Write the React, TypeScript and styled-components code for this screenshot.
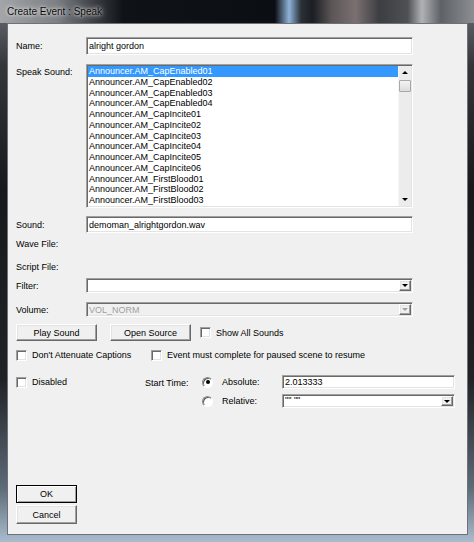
import React from 'react';
import styled, { createGlobalStyle, css } from 'styled-components';

const GlobalStyle = createGlobalStyle`
  html, body {
    margin: 0;
    padding: 0;
    background: #1c1d20;
  }
  body {
    font-family: 'Liberation Sans', Arial, sans-serif;
  }
  * {
    box-sizing: border-box;
  }
`;

const sunken = css`
  border: 1px solid;
  border-color: #a0a0a0 #ffffff #ffffff #a0a0a0;
  box-shadow: inset 1px 1px 0 #696969, inset -1px -1px 0 #e3e3e3;
`;

const raised = css`
  border: 1px solid;
  border-color: #ffffff #696969 #696969 #ffffff;
  box-shadow: inset -1px -1px 0 #a0a0a0, inset 1px 1px 0 #e3e3e3;
`;

const Window = styled.div`
  width: 474px;
  height: 542px;
  display: flex;
  flex-direction: column;
  background: linear-gradient(
    to bottom,
    #6d7075 0%,
    #34363a 12%,
    #18191c 35%,
    #202226 70%,
    #5d6a78 90%,
    #a9bccd 100%
  );
`;

const TitleBar = styled.div`
  height: 23px;
  flex-shrink: 0;
  display: flex;
  align-items: center;
  padding-left: 7px;
  background: linear-gradient(
    to right,
    #a3a5a8 0%,
    #7c7f83 12%,
    #3a3d42 20%,
    #0f1216 26%,
    #0b0e13 58%,
    #8fb3d8 61%,
    #2b3037 63.5%,
    #1b1e23 66%,
    #5c5657 70%,
    #7b7071 75%,
    #3d3e42 80%,
    #4e5054 86%,
    #b0b2b5 89%,
    #5e6165 93%,
    #8b8e92 100%
  );
`;

const Title = styled.span`
  font-size: 10px;
  color: #0a0a0a;
  text-shadow: 0 0 6px rgba(255, 255, 255, 0.9), 0 0 3px rgba(255, 255, 255, 0.8);
`;

const Frame = styled.div`
  flex: 1;
  display: flex;
  padding: 0 6px 7px 7px;
`;

const Panel = styled.div`
  flex: 1;
  display: flex;
  flex-direction: column;
  background: #f0f0f0;
  border: 1px solid #6e7278;
  padding: 13px 12px 10px 8px;
  font-size: 9px;
  color: #000;
`;

const Row = styled.div<{ $mt?: number; $h: number; $top?: boolean }>`
  display: flex;
  align-items: ${(p) => (p.$top ? 'flex-start' : 'center')};
  margin-top: ${(p) => p.$mt ?? 0}px;
  height: ${(p) => p.$h}px;
  flex-shrink: 0;
`;

const Label = styled.div<{ $w?: number; $pt?: number }>`
  width: ${(p) => p.$w ?? 70}px;
  flex-shrink: 0;
  padding-top: ${(p) => p.$pt ?? 0}px;
  white-space: nowrap;
`;

const TextBox = styled.div<{ $w?: number }>`
  ${sunken};
  width: ${(p) => p.$w ?? 327}px;
  height: 100%;
  background: #fff;
  display: flex;
  align-items: center;
  padding-left: 2px;
  white-space: nowrap;
`;

const ListBox = styled.div`
  ${sunken};
  width: 327px;
  height: 100%;
  background: #fff;
  display: flex;
  padding: 1px;
`;

const Items = styled.div`
  flex: 1;
  overflow: hidden;
`;

const Item = styled.div<{ $selected?: boolean }>`
  height: 10.75px;
  line-height: 10.75px;
  padding-left: 1px;
  white-space: nowrap;
  background: ${(p) => (p.$selected ? '#3399ff' : 'transparent')};
  color: ${(p) => (p.$selected ? '#fff' : '#000')};
`;

const ScrollBar = styled.div`
  width: 13px;
  flex-shrink: 0;
  background: #ececec;
  border-left: 1px solid #f6f6f6;
  display: flex;
  flex-direction: column;
  align-items: center;
`;

const ArrowCell = styled.div`
  height: 13px;
  width: 100%;
  display: flex;
  align-items: center;
  justify-content: center;
`;

const Triangle = styled.div<{ $dir: 'up' | 'down'; $color?: string }>`
  width: 0;
  height: 0;
  border-left: 3px solid transparent;
  border-right: 3px solid transparent;
  ${(p) =>
    p.$dir === 'up'
      ? `border-bottom: 3px solid ${p.$color ?? '#000'};`
      : `border-top: 3px solid ${p.$color ?? '#000'};`}
`;

const Thumb = styled.div`
  width: 12px;
  height: 12px;
  margin-top: 1px;
  border: 1px solid #a8a8a8;
  border-radius: 1px;
  background: linear-gradient(to bottom, #f4f4f4, #dcdcdc);
`;

const Spacer = styled.div`
  flex: 1;
`;

const Combo = styled.div<{ $w?: number; $disabled?: boolean }>`
  ${sunken};
  width: ${(p) => p.$w ?? 327}px;
  height: 100%;
  background: ${(p) => (p.$disabled ? '#f0f0f0' : '#fff')};
  color: ${(p) => (p.$disabled ? '#a0a0a0' : '#000')};
  display: flex;
  align-items: center;
  padding: 1px 1px 1px 2px;
  white-space: nowrap;
`;

const ComboText = styled.div<{ $top?: boolean }>`
  flex: 1;
  align-self: ${(p) => (p.$top ? 'flex-start' : 'center')};
  line-height: ${(p) => (p.$top ? '8px' : 'normal')};
`;

const DropButton = styled.div`
  ${raised};
  width: 12px;
  height: 100%;
  background: #f0f0f0;
  display: flex;
  align-items: center;
  justify-content: center;
  flex-shrink: 0;
`;

const PushButton = styled.div<{ $w: number; $default?: boolean }>`
  ${raised};
  width: ${(p) => p.$w}px;
  height: 100%;
  background: #f0f0f0;
  display: flex;
  align-items: center;
  justify-content: center;
  flex-shrink: 0;
  ${(p) =>
    p.$default &&
    css`
      outline: 1px solid #000;
      outline-offset: -1px;
      border-color: #000 #696969 #696969 #000;
      box-shadow: inset 1px 1px 0 #ffffff, inset -1px -1px 0 #a0a0a0;
    `}
`;

const CheckLabel = styled.div<{ $w?: number; $ml?: number }>`
  display: flex;
  align-items: center;
  gap: 5px;
  white-space: nowrap;
  margin-left: ${(p) => p.$ml ?? 0}px;
  width: ${(p) => (p.$w ? `${p.$w}px` : 'auto')};
  flex-shrink: 0;
`;

const CheckBox = styled.div`
  ${sunken};
  width: 11px;
  height: 11px;
  background: #fff;
  flex-shrink: 0;
`;

const Radio = styled.div<{ $checked?: boolean }>`
  width: 11px;
  height: 11px;
  border-radius: 50%;
  border: 1px solid;
  border-color: #8a8a8a #ffffff #ffffff #8a8a8a;
  box-shadow: inset 1px 1px 0 #5f5f5f;
  background: #fff;
  display: flex;
  align-items: center;
  justify-content: center;
  flex-shrink: 0;
  &::after {
    content: '';
    display: ${(p) => (p.$checked ? 'block' : 'none')};
    width: 4px;
    height: 4px;
    border-radius: 50%;
    background: #000;
  }
`;

const TimeBlock = styled.div`
  display: flex;
  flex-direction: column;
  gap: 5px;
`;

const ButtonStack = styled.div`
  margin-top: auto;
  display: flex;
  flex-direction: column;
`;

const sounds = [
  'Announcer.AM_CapEnabled01',
  'Announcer.AM_CapEnabled02',
  'Announcer.AM_CapEnabled03',
  'Announcer.AM_CapEnabled04',
  'Announcer.AM_CapIncite01',
  'Announcer.AM_CapIncite02',
  'Announcer.AM_CapIncite03',
  'Announcer.AM_CapIncite04',
  'Announcer.AM_CapIncite05',
  'Announcer.AM_CapIncite06',
  'Announcer.AM_FirstBlood01',
  'Announcer.AM_FirstBlood02',
  'Announcer.AM_FirstBlood03',
  'Announcer.AM_FirstBlood04',
];

export default function App() {
  return (
    <>
      <GlobalStyle />
      <Window>
        <TitleBar>
          <Title>Create Event : Speak</Title>
        </TitleBar>
        <Frame>
          <Panel>
            <Row $h={18}>
              <Label>Name:</Label>
              <TextBox>alright gordon</TextBox>
            </Row>

            <Row $mt={9} $h={144} $top>
              <Label $pt={3}>Speak Sound:</Label>
              <ListBox>
                <Items>
                  {sounds.map((s, i) => (
                    <Item key={s} $selected={i === 0}>
                      {s}
                    </Item>
                  ))}
                </Items>
                <ScrollBar>
                  <ArrowCell>
                    <Triangle $dir="up" />
                  </ArrowCell>
                  <Thumb />
                  <Spacer />
                  <ArrowCell>
                    <Triangle $dir="down" />
                  </ArrowCell>
                </ScrollBar>
              </ListBox>
            </Row>

            <Row $mt={8} $h={17}>
              <Label>Sound:</Label>
              <TextBox>demoman_alrightgordon.wav</TextBox>
            </Row>

            <Row $mt={3} $h={16}>
              <Label>Wave File:</Label>
            </Row>

            <Row $mt={7} $h={16}>
              <Label>Script File:</Label>
            </Row>

            <Row $mt={3} $h={15}>
              <Label>Filter:</Label>
              <Combo>
                <ComboText />
                <DropButton>
                  <Triangle $dir="down" />
                </DropButton>
              </Combo>
            </Row>

            <Row $mt={9} $h={15}>
              <Label>Volume:</Label>
              <Combo $disabled>
                <ComboText>VOL_NORM</ComboText>
                <DropButton>
                  <Triangle $dir="down" $color="#a0a0a0" />
                </DropButton>
              </Combo>
            </Row>

            <Row $mt={7} $h={17}>
              <PushButton $w={81}>Play Sound</PushButton>
              <PushButton $w={81} style={{ marginLeft: 13 }}>
                Open Source
              </PushButton>
              <CheckLabel $ml={9}>
                <CheckBox />
                Show All Sounds
              </CheckLabel>
            </Row>

            <Row $mt={7} $h={14}>
              <CheckLabel $w={135}>
                <CheckBox />
                Don&apos;t Attenuate Captions
              </CheckLabel>
              <CheckLabel>
                <CheckBox />
                Event must complete for paused scene to resume
              </CheckLabel>
            </Row>

            <Row $mt={13} $h={34} $top>
              <CheckLabel $w={129} style={{ height: 14 }}>
                <CheckBox />
                Disabled
              </CheckLabel>
              <Label $w={57} $pt={3}>
                Start Time:
              </Label>
              <TimeBlock>
                <Row $h={14}>
                  <CheckLabel $w={80} style={{ gap: 9 }}>
                    <Radio $checked />
                    Absolute:
                  </CheckLabel>
                  <TextBox $w={173}>2.013333</TextBox>
                </Row>
                <Row $h={14}>
                  <CheckLabel $w={80} style={{ gap: 9 }}>
                    <Radio />
                    Relative:
                  </CheckLabel>
                  <Combo $w={173}>
                    <ComboText $top>&quot;&quot; &quot;&quot;</ComboText>
                    <DropButton>
                      <Triangle $dir="down" />
                    </DropButton>
                  </Combo>
                </Row>
              </TimeBlock>
            </Row>

            <ButtonStack>
              <Row $h={18}>
                <PushButton $w={61} $default>
                  OK
                </PushButton>
              </Row>
              <Row $mt={2} $h={19}>
                <PushButton $w={61}>Cancel</PushButton>
              </Row>
            </ButtonStack>
          </Panel>
        </Frame>
      </Window>
    </>
  );
}
